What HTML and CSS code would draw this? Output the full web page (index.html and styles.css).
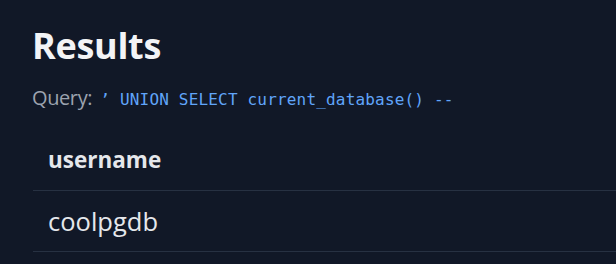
FILE: index.html
```html
<!DOCTYPE html>
<html lang="en">
<head>
<meta charset="utf-8">
<title>Results</title>
<link rel="stylesheet" href="styles.css">
</head>
<body>
  <main class="page">
    <h1 class="title">Results</h1>
    <p class="query"><span class="label">Query:</span> <code class="code">’ UNION SELECT current_database() --</code></p>
    <table class="results">
      <thead>
        <tr><th class="cell head">username</th></tr>
      </thead>
      <tbody>
        <tr><td class="cell data">coolpgdb</td></tr>
      </tbody>
    </table>
  </main>
</body>
</html>
```

FILE: styles.css
```css
html, body {
  margin: 0;
  padding: 0;
  background: #111827;
}

body {
  font-family: "Open Sans", "Noto Sans", sans-serif;
  color: #e5e7eb;
  overflow: hidden;
}

.page {
  padding: 24px 0 0 32px;
}

.title {
  margin: 0;
  font-size: 36px;
  line-height: 44px;
  letter-spacing: -0.3px;
  font-weight: 700;
  color: #f3f4f6;
}

.query {
  margin: 16px 0 0;
  font-size: 20px;
  line-height: 28px;
  color: #9ca3af;
}

.label {
  letter-spacing: -0.4px;
}

.code {
  margin-left: 3px;
  font-family: "DejaVu Sans Mono", "Liberation Mono", monospace;
  font-size: 16px;
  line-height: 20px;
  letter-spacing: 0.18px;
  color: #60a5fa;
}

.results {
  margin: 18px 0 0 1px;
  width: calc(100% - 1px);
  border-collapse: collapse;
}

.results tr {
  border-bottom: 1px solid #273142;
}

.cell {
  text-align: left;
  padding: 14px 15px;
  font-size: 22.5px;
  line-height: 32px;
  font-weight: 400;
  color: #e5e7eb;
}

.head {
  font-weight: 700;
}

.data {
  font-size: 25.5px;
}
```
